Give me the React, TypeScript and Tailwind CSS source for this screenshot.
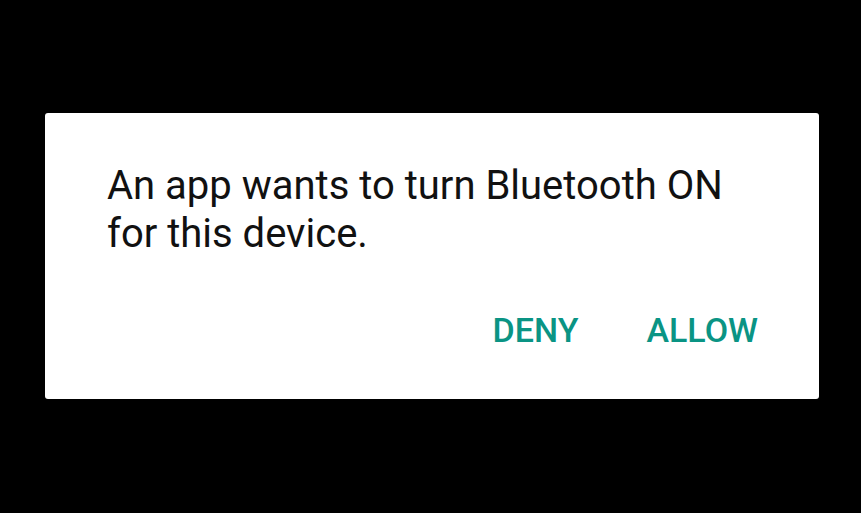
export default function App() {
  return (
    <div className="flex h-[513px] w-[861px] bg-black pt-[113px] pl-[45px] font-['Roboto',sans-serif]">
      <div className="flex h-[286px] w-[774px] flex-col rounded-[3px] bg-white">
        <p className="pl-[62px] pt-[49px] text-[40px] leading-[48px] text-[#111]">
          An app wants to turn Bluetooth ON
          <br />
          for this device.
        </p>
        <div className="mt-[52px] flex justify-end gap-[68px] pr-[61px]">
          <button type="button" className="text-[34px] leading-[40px] font-medium text-[#0a9484]">
            DENY
          </button>
          <button type="button" className="text-[34px] leading-[40px] font-medium text-[#0a9484]">
            ALLOW
          </button>
        </div>
      </div>
    </div>
  );
}
